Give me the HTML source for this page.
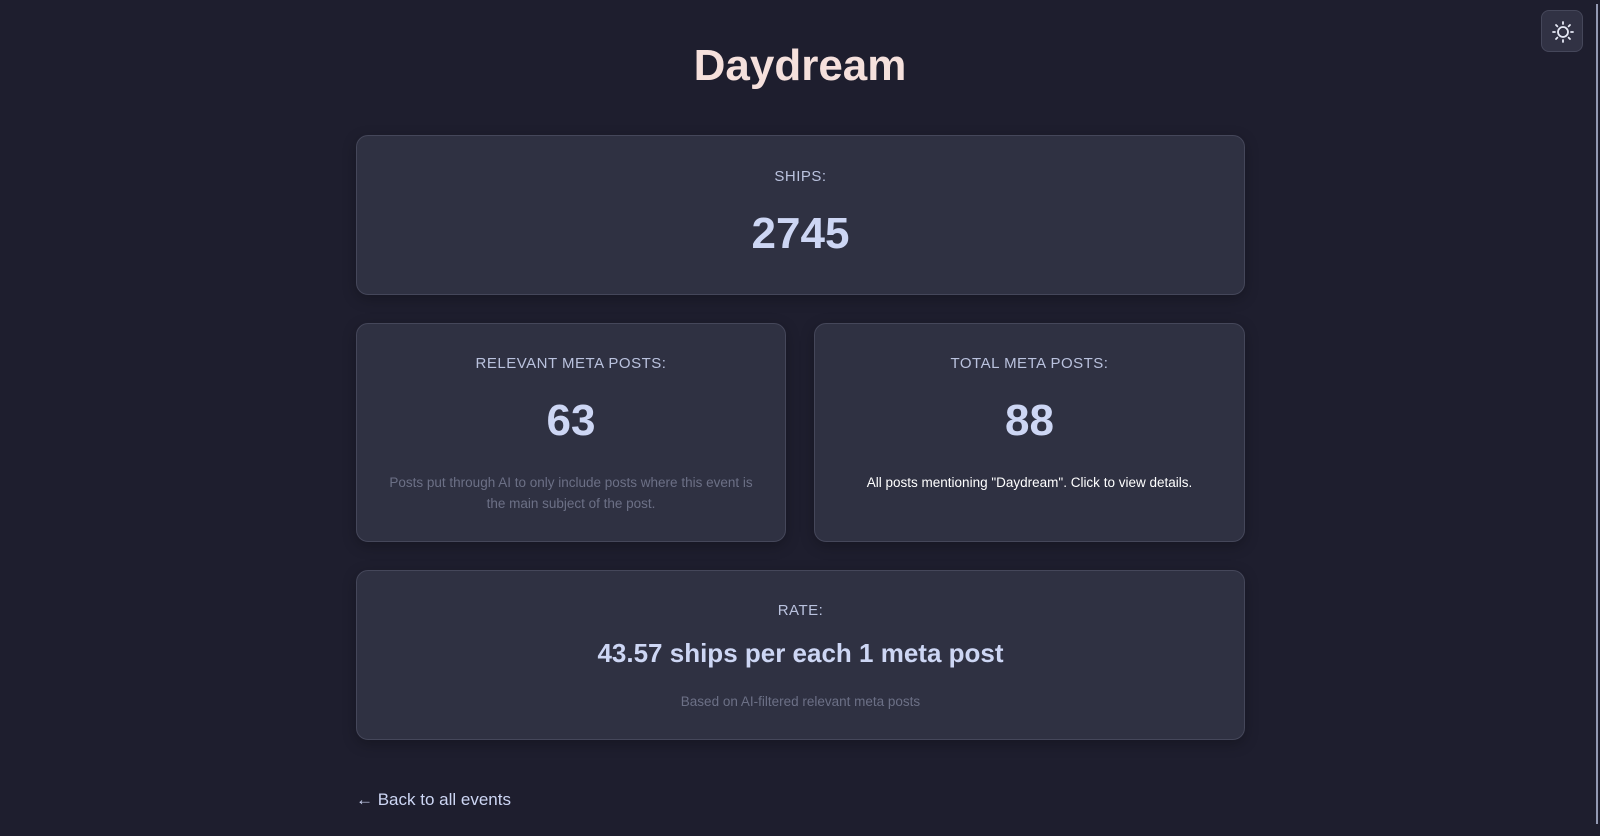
<!DOCTYPE html>
<html><head><meta charset="utf-8"><style>
*{box-sizing:border-box;margin:0;padding:0}
html,body{width:1600px;height:836px;overflow:hidden;background:#1e1e2e;font-family:"Liberation Sans","DejaVu Sans",sans-serif}
h1{position:absolute;top:41px;left:0;width:1600px;text-align:center;color:#f5e0dc;font-size:44px;font-weight:bold}
.card{position:absolute;background:#2f3142;border:1px solid #45475a;border-radius:12px;text-align:center;box-shadow:0 4px 14px rgba(0,0,0,.25)}
.lbl{color:#bac2de;font-size:15px;letter-spacing:.5px}
.num{color:#cdd6f4;font-size:44px;font-weight:bold}
.sub{color:#6c7086;font-size:13.5px;line-height:21px}
.toggle{position:absolute;left:1541px;top:10px;width:42px;height:42px;border-radius:8px;background:#313244;border:1px solid #45475a}
.scroll{position:absolute;left:1596px;top:4px;width:2px;height:820px;background:#9399b2}
.back{position:absolute;left:356px;top:790px;color:#cdd6f4;font-size:17px}
</style></head><body>
<h1>Daydream</h1>
<div class="toggle"><svg width="42" height="42" viewBox="0 0 42 42" fill="none" stroke="#e6e9f5" stroke-width="1.8" stroke-linecap="round"><circle cx="21" cy="21" r="5"/><path d="M21 11v2M21 29v2M11 21h2M29 21h2M14 14l1.4 1.4M26.6 26.6l1.4 1.4M14 28l1.4-1.4M26.6 15.4l1.4-1.4"/></svg></div>
<div class="scroll"></div>
<div class="card" style="left:356px;top:135px;width:889px;height:160px"><div class="lbl" style="margin-top:32px">SHIPS:</div><div class="num" style="margin-top:24px">2745</div></div>
<div class="card" style="left:356px;top:323px;width:430px;height:219px"><div class="lbl" style="margin-top:31px">RELEVANT META POSTS:</div><div class="num" style="margin-top:24px">63</div><div class="sub" style="margin:26px 30px 0">Posts put through AI to only include posts where this event is the main subject of the post.</div></div>
<div class="card" style="left:814px;top:323px;width:431px;height:219px"><div class="lbl" style="margin-top:31px">TOTAL META POSTS:</div><div class="num" style="margin-top:24px">88</div><div class="sub" style="margin:26px 30px 0;color:#fff">All posts mentioning "Daydream". Click to view details.</div></div>
<div class="card" style="left:356px;top:570px;width:889px;height:170px"><div class="lbl" style="margin-top:31px">RATE:</div><div style="color:#cdd6f4;font-size:26px;font-weight:bold;margin-top:19px">43.57 ships per each 1 meta post</div><div class="sub" style="margin-top:22px">Based on AI-filtered relevant meta posts</div></div>
<div class="back">← Back to all events</div>
</body></html>
